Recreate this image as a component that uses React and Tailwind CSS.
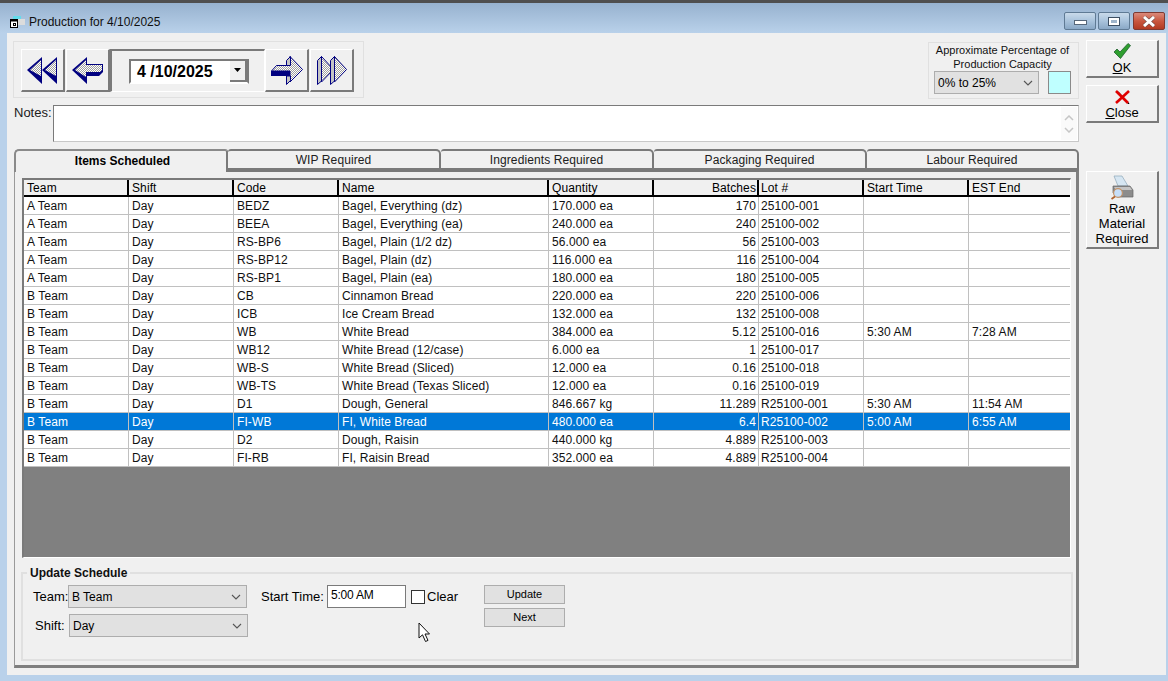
import React from "react";

const rows = [
  ["A Team","Day","BEDZ","Bagel, Everything (dz)","170.000 ea","170","25100-001","",""],
  ["A Team","Day","BEEA","Bagel, Everything (ea)","240.000 ea","240","25100-002","",""],
  ["A Team","Day","RS-BP6","Bagel, Plain (1/2 dz)","56.000 ea","56","25100-003","",""],
  ["A Team","Day","RS-BP12","Bagel, Plain (dz)","116.000 ea","116","25100-004","",""],
  ["A Team","Day","RS-BP1","Bagel, Plain (ea)","180.000 ea","180","25100-005","",""],
  ["B Team","Day","CB","Cinnamon Bread","220.000 ea","220","25100-006","",""],
  ["B Team","Day","ICB","Ice Cream Bread","132.000 ea","132","25100-008","",""],
  ["B Team","Day","WB","White Bread","384.000 ea","5.12","25100-016","5:30 AM","7:28 AM"],
  ["B Team","Day","WB12","White Bread (12/case)","6.000 ea","1","25100-017","",""],
  ["B Team","Day","WB-S","White Bread (Sliced)","12.000 ea","0.16","25100-018","",""],
  ["B Team","Day","WB-TS","White Bread (Texas Sliced)","12.000 ea","0.16","25100-019","",""],
  ["B Team","Day","D1","Dough, General","846.667 kg","11.289","R25100-001","5:30 AM","11:54 AM"],
  ["B Team","Day","FI-WB","FI, White Bread","480.000 ea","6.4","R25100-002","5:00 AM","6:55 AM"],
  ["B Team","Day","D2","Dough, Raisin","440.000 kg","4.889","R25100-003","",""],
  ["B Team","Day","FI-RB","FI, Raisin Bread","352.000 ea","4.889","R25100-004","",""],
];
const cols = [
  ["Team","w-[105px]"],["Shift","w-[105px]"],["Code","w-[105px]"],["Name","w-[210px]"],
  ["Quantity","w-[105px]"],["Batches","w-[105px]"],["Lot #","w-[105px]"],["Start Time","w-[105px]"],["EST End","w-[101px]"],
];
const tabs = ["WIP Required","Ingredients Required","Packaging Required"];

function Dither() {
  return (
    <defs>
      <pattern id="dither" width="2" height="2" patternUnits="userSpaceOnUse">
        <rect width="2" height="2" fill="#ffffff" />
        <rect width="1" height="1" fill="#a0a0a0" />
        <rect x="1" y="1" width="1" height="1" fill="#a0a0a0" />
      </pattern>
    </defs>
  );
}

function BtnFrame({ children }) {
  return (
    <button className="w-[44px] h-[43px] flex items-center justify-center bg-[#f0f0f0] border-t border-l border-t-white border-l-white border-r-2 border-b-2 border-r-[#7a7a7a] border-b-[#7a7a7a]">
      {children}
    </button>
  );
}

const NAVY = "#000080";
const IconFirst = () => (
  <svg width="31" height="27" viewBox="0 0 31 27">
    <Dither />
    <path d="M0 13 L15 0 V27 Z" fill={NAVY} />
    <path d="M3 13 L14 3 V19 Z" fill="url(#dither)" />
    <path d="M15 13 L30 0 V27 Z" fill={NAVY} />
    <path d="M18 13 L29 3 V19 Z" fill="url(#dither)" />
  </svg>
);
const IconPrev = () => (
  <svg width="32" height="27" viewBox="0 0 32 27">
    <Dither />
    <path d="M0 13 L15 0 V7 H31 V15 L27 19 H15 V27 Z" fill={NAVY} />
    <path d="M3 13 L14 3 V8 H30 V13 L28 15 H14 V20 Z" fill="url(#dither)" />
  </svg>
);
const IconNext = () => (
  <svg width="32" height="29" viewBox="0 0 32 29">
    <Dither />
    <path d="M0.5 15 L5.5 9.5 H19 V0.5 L31.5 13.5 L19 26 V15 Z" fill="url(#dither)" stroke={NAVY} />
    <path d="M0 15 H19 V20 H0 Z" fill={NAVY} />
    <path d="M15.5 4.5 L19.5 0.5 V9.5 H15.5 Z" fill="#c4c4c4" stroke={NAVY} />
    <path d="M15.5 20 H19.5 V24.5 L15.5 28.5 Z" fill="#c4c4c4" stroke={NAVY} />
  </svg>
);
const IconLast = () => (
  <svg width="30" height="29" viewBox="0 0 30 29">
    <Dither />
    <path d="M4.5 0.5 L16.5 13.5 L4.5 26 Z" fill="url(#dither)" stroke={NAVY} />
    <path d="M0.5 4.5 L4.5 0.5 V25 L0.5 28.5 Z" fill="#c4c4c4" stroke={NAVY} />
    <path d="M17.5 0.5 L29.5 13.5 L17.5 26 Z" fill="url(#dither)" stroke={NAVY} />
    <path d="M13.5 4.5 L17.5 0.5 V25 L13.5 28.5 Z" fill="#c4c4c4" stroke={NAVY} />
  </svg>
);

const Caret = () => (
  <svg width="10" height="6" viewBox="0 0 10 6" fill="none" stroke="#555" strokeWidth="1.1">
    <path d="M1 1 L5 5 L9 1" />
  </svg>
);

function Select({ value, className }) {
  return (
    <div className={`h-[23px] flex items-center justify-between pl-[3px] pr-[3px] bg-[#e1e1e1] border border-[#adadad] text-[12px] text-black ${className}`}>
      <span>{value}</span>
      <span className="w-[14px] flex justify-center"><Caret /></span>
    </div>
  );
}

function Flat({ children }) {
  return (
    <button className="w-[81px] h-[19px] bg-[#e1e1e1] border border-[#adadad] text-[11px] leading-none text-black">{children}</button>
  );
}

function Win({ children, bg }) {
  return (
    <div className={`w-[32px] h-[18px] border border-[#5f7a94] rounded-[2px] flex items-center justify-center ${bg}`}>{children}</div>
  );
}

const BLUE_BTN = "bg-gradient-to-b from-[#c9daea] via-[#a9c3dc] to-[#8aa8c6]";

function padFor(i) {
  if (i === 5) return "pl-[3px] pr-[1px] text-right";
  if (i === 6) return "pl-[2px] pr-[3px]";
  return "px-[3px]";
}

export default function App() {
  return (
    <div className="w-[1168px] h-[681px] overflow-hidden bg-[#b9d1ea] flex flex-col text-[12px] text-black relative" style={{ fontFamily: '"Liberation Sans", Arial, sans-serif' }}>
      <div className="h-[3px] bg-[#4f4f4f] shrink-0" />
      <div className="h-[30px] shrink-0 bg-gradient-to-b from-[#97b2cf] to-[#b9d1ea] flex items-start pl-[9px] pr-[3px]">
        <div className="flex items-center h-[14px] mt-[12px]">
          <svg width="17" height="14" viewBox="0 0 17 14" className="mr-[3px]">
            <rect x="4" y="1" width="8" height="3" fill="#63dcec" />
            <rect x="8" y="4" width="8" height="6" fill="#dcdcdc" />
            <rect x="1.5" y="4.5" width="7" height="8" fill="#fff" stroke="#000" />
            <rect x="1" y="4" width="8" height="2.5" fill="#000" />
            <rect x="4" y="8" width="3" height="3" fill="#000" />
            <rect x="5" y="9" width="1" height="1" fill="#fff" />
          </svg>
          <span className="text-[12px] text-[#101010]">Production for 4/10/2025</span>
        </div>
        <div className="ml-auto flex mt-[9px]">
          <Win bg={BLUE_BTN}>
            <div className="w-[13px] h-[5px] mt-[3px] bg-white border border-[#56677a]" />
          </Win>
          <Win bg={`${BLUE_BTN} ml-[2px]`}>
            <div className="w-[12px] h-[9px] bg-white border border-[#3d4f63] flex items-center justify-center">
              <div className="w-[6px] h-[3px] bg-[#9fb5cb]" />
            </div>
          </Win>
          <Win bg="ml-[3px] bg-gradient-to-b from-[#d9897a] via-[#c9573f] to-[#b23a22] border-[#7d3a32]">
            <svg width="16" height="11" viewBox="0 0 16 11"><path d="M3 1 L13 10 M13 1 L3 10" stroke="#6a4a48" strokeWidth="4" /><path d="M3 1 L13 10 M13 1 L3 10" stroke="#fff" strokeWidth="3" /></svg>
          </Win>
        </div>
      </div>

      <div className="w-[1159px] h-[642px] ml-[7px] bg-[#f0f0f0] flex shrink-0">
        <div className="w-[1072px] shrink-0 flex flex-col">
          <div className="flex justify-between items-start h-[65px] pt-[8px] pl-[6px]">
            <div className="w-[351px] h-[57px] border border-[#e0e0e0] pt-[7px] pl-[7px] flex items-start">
              <BtnFrame><IconFirst /></BtnFrame>
              <div className="w-px" />
              <BtnFrame><IconPrev /></BtnFrame>
              <div className="w-[155px] h-[43px] border-t-2 border-l-2 border-t-[#7a7a7a] border-l-[#7a7a7a] border-r border-b border-r-white border-b-white flex items-center pl-[17px]">
                <div className="w-[120px] h-[25px] bg-white border-2 border-t-[#7a7a7a] border-l-[#7a7a7a] border-r-[#7a7a7a] border-b-white flex items-center pl-[6px] justify-between">
                  <span className="text-[16px] font-bold mt-[2px]">4 /10/2025</span>
                  <span className="w-[17px] h-[21px] bg-[#f0f0f0] border-r-2 border-b-2 border-[#7a7a7a] flex items-center justify-center">
                    <svg width="7" height="4" viewBox="0 0 7 4"><path d="M0 0 H7 L3.5 4 Z" fill="#000" /></svg>
                  </span>
                </div>
              </div>
              <BtnFrame><IconNext /></BtnFrame>
              <div className="w-px" />
              <BtnFrame><IconLast /></BtnFrame>
            </div>
            <div className="w-[151px] h-[57px] mt-[1px] border border-[#e0e0e0] flex flex-col items-center pl-[5px] pr-[7px]">
              <div className="text-[11px] leading-[14px] text-center text-[#101010] whitespace-nowrap">Approximate Percentage of<br />Production Capacity</div>
              <div className="flex justify-between w-full">
                <Select value="0% to 25%" className="w-[105px]" />
                <div className="w-[23px] h-[23px] bg-[#bfffff] border border-[#8a8a8a]" />
              </div>
            </div>
          </div>

          <div className="flex mt-[7px] pl-[7px] h-[37px]">
            <div className="w-[39px] text-[13px] leading-[15px] text-[#202020]">Notes:</div>
            <div className="w-[1026px] h-[37px] bg-white border border-[#7a7a7a] border-r-[#c8c8c8] border-b-[#c8c8c8] flex justify-end">
              <div className="w-[16px] flex flex-col items-center justify-center gap-[6px] mr-[1px] bg-[#fafafa] my-px">
                <svg width="10" height="6" viewBox="0 0 10 6" fill="none" stroke="#c6c6c6" strokeWidth="1.5"><path d="M1 5 L5 1 L9 5" /></svg>
                <svg width="10" height="6" viewBox="0 0 10 6" fill="none" stroke="#c6c6c6" strokeWidth="1.5"><path d="M1 1 L5 5 L9 1" /></svg>
              </div>
            </div>
          </div>

          <div className="mt-[7px] pl-[7px] h-[21px] flex items-end relative z-10 tracking-[0.1px]">
            <div className="w-[214px] h-[23px] mb-[-2px] border-t-2 border-l-2 border-r-2 border-[#8a8a8a] border-r-[#7a7a7a] rounded-tl-[5px] rounded-tr-[3px] bg-[#f0f0f0] font-bold tracking-normal flex items-center justify-center text-[12px] pb-[1px] pl-[3px]">Items Scheduled</div>
            {tabs.map((t) => (
              <div key={t} className="w-[213px] h-[21px] border-t-2 border-r-2 border-b-2 border-[#7a7a7a] rounded-tr-[5px] rounded-tl-[3px] bg-[#f0f0f0] flex items-center justify-center text-[12px] text-[#202020]">{t}</div>
            ))}
            <div className="w-[212px] h-[21px] border-t-2 border-r-2 border-b-2 border-[#7a7a7a] rounded-tr-[5px] rounded-tl-[3px] bg-[#f0f0f0] flex items-center justify-center text-[12px] text-[#202020]">Labour Required</div>
          </div>

          <div className="ml-[7px] w-[1065px] h-[498px] border-l border-l-[#9a9a9a] border-t-2 border-t-[#7a7a7a] border-r-[3px] border-b-[3px] border-r-[#7f7f7f] border-b-[#7f7f7f] px-[7px] pt-[6px]">
            <div className="w-[1049px] h-[380px] bg-[#808080] border-t-2 border-l-2 border-t-[#7a7a7a] border-l-[#7a7a7a] border-r border-b border-r-white border-b-white tracking-[0.1px]">
              <div className="flex h-[17px] bg-[#f0f0f0] border-b-2 border-black">
                {cols.map(([c, w], i) => (
                  <div key={c} className={`${w} h-full leading-[17px] text-[12px] ${padFor(i)} ${i < 8 ? "border-r-2 border-black" : ""}`}>{c}</div>
                ))}
              </div>
              {rows.map((r, ri) => {
                const sel = ri === 12;
                return (
                  <div key={ri} className={`flex h-[18px] border-b border-[#c0c0c0] ${sel ? "bg-[#0078d7] text-white" : "bg-white text-[#101010]"}`}>
                    {r.map((v, i) => (
                      <div key={i} className={`${cols[i][1]} h-full leading-[19px] whitespace-nowrap overflow-hidden ${i === 5 ? "pl-[3px] pr-[2px] text-right" : padFor(i)} ${i < 8 ? "border-r border-[#c0c0c0]" : ""}`}>{v}</div>
                    ))}
                  </div>
                );
              })}
            </div>

            <div className="mt-[14px] ml-[-1px] w-[1052px] h-[89px] border-2 border-[#e0e0e0] relative pl-[10px] pt-[11px] flex">
              <div className="absolute left-[4px] top-[-8px] bg-[#f0f0f0] px-[3px] font-bold text-[12px] leading-[14px] text-[#101010]">Update Schedule</div>
              <div className="flex flex-col gap-[6px] w-[216px]">
                <div className="flex items-center h-[23px] text-[13px]">
                  <span className="w-[35px] whitespace-nowrap">Team:</span>
                  <Select value="B Team" className="w-[179px]" />
                </div>
                <div className="flex items-center h-[23px] text-[13px]">
                  <span className="w-[36px] pl-[2px] whitespace-nowrap">Shift:</span>
                  <Select value="Day" className="w-[179px]" />
                </div>
              </div>
              <div className="flex items-start ml-[12px] h-[23px] text-[13px]">
                <span className="w-[66px] leading-[23px] whitespace-nowrap">Start Time:</span>
                <div className="w-[79px] h-[23px] bg-white border border-[#7a7a7a] pl-[3px] leading-[19px] text-[12px] tracking-[-0.2px]">5:00 AM</div>
                <div className="w-[14px] h-[14px] ml-[5px] mt-[5px] bg-white border border-[#333]" />
                <span className="w-[31px] leading-[23px] ml-[2px]">Clear</span>
              </div>
              <div className="flex flex-col gap-[4px] ml-[26px]">
                <Flat>Update</Flat>
                <Flat>Next</Flat>
              </div>
            </div>
          </div>
        </div>

        <div className="w-[73px] ml-[7px] pt-[7px] flex flex-col text-[13px]">
          <button className="w-[73px] h-[38px] bg-[#f0f0f0] border-t border-l border-white border-r-2 border-b-2 border-r-[#7a7a7a] border-b-[#7a7a7a] flex flex-col items-center">
            <svg width="18" height="16" viewBox="0 0 18 16" className="mt-[2px]">
              <path d="M1 9 L4 6 L7 9 L15 0.5 L17.5 2.5 L7.5 15.5 Z" fill="#2f9f2f" stroke="#1f5f2f" strokeWidth="0.8" />
            </svg>
            <span className="leading-[14px] mt-[2px]"><span className="underline">O</span>K</span>
          </button>
          <button className="w-[73px] h-[38px] mt-[7px] bg-[#f0f0f0] border-t border-l border-white border-r-2 border-b-2 border-r-[#7a7a7a] border-b-[#7a7a7a] flex flex-col items-center">
            <svg width="15" height="14" viewBox="0 0 15 14" className="mt-[4px]">
              <path d="M3 2 L14 14" stroke="#000" strokeWidth="1.2" />
              <path d="M1 1 L13 13" stroke="#e00000" strokeWidth="2.6" />
              <path d="M14 1 L1 13" stroke="#e00000" strokeWidth="2.6" />
            </svg>
            <span className="leading-[14px] mt-[2px]"><span className="underline">C</span>lose</span>
          </button>
          <button className="w-[73px] h-[78px] mt-[48px] bg-[#f0f0f0] border-t border-l border-white border-r-2 border-b-2 border-r-[#7a7a7a] border-b-[#7a7a7a] flex flex-col items-center">
            <svg width="24" height="25" viewBox="0 0 24 25" className="mt-[3px]">
              <path d="M4 1 H12 L18 11 H8 Z" fill="#d6e6f2" stroke="#8ea6b8" strokeWidth="0.7" />
              <path d="M3 11 H20 L23 15 V22 H8 L3 18 Z" fill="#8c8c8c" stroke="#666" strokeWidth="0.7" />
              <path d="M4 12 H20 L22 15 H6 Z" fill="#c4c4c4" />
              <circle cx="8" cy="18" r="4.4" fill="#c6def8" stroke="#c4946a" strokeWidth="1.2" />
              <path d="M5 21.5 L1.5 24" stroke="#b0622e" strokeWidth="1.8" />
            </svg>
            <span className="leading-[15px] text-center mt-[1px]">Raw<br />Material<br />Required</span>
          </button>
        </div>
      </div>

      <svg width="14" height="21" viewBox="0 0 14 21" className="absolute left-[418px] top-[622px]">
        <path d="M1 1 V16 L4.5 12.8 L7.5 19.5 L10 18.4 L7 12 H11.5 Z" fill="#fff" stroke="#111" strokeWidth="1" />
      </svg>
    </div>
  );
}
